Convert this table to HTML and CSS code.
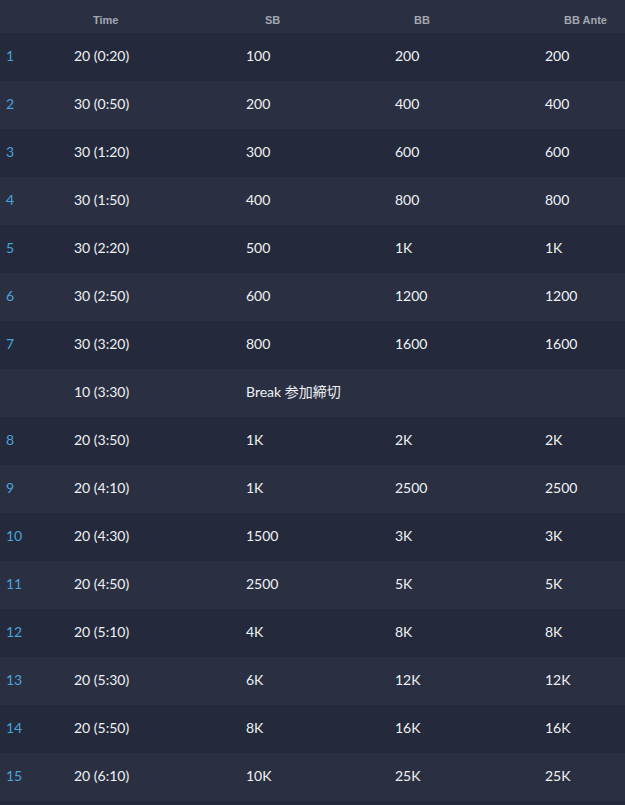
FILE: index.html
```html
<!DOCTYPE html>
<html>
<head>
<meta charset="utf-8">
<link rel="stylesheet" href="styles.css">
</head>
<body>
<div class="table">
  <div class="row head">
    <div class="cell"></div>
    <div class="cell">Time</div>
    <div class="cell">SB</div>
    <div class="cell">BB</div>
    <div class="cell">BB Ante</div>
  </div>
  <div class="row"><div class="cell lv">1</div><div class="cell">20 (0:20)</div><div class="cell">100</div><div class="cell">200</div><div class="cell">200</div></div>
  <div class="row"><div class="cell lv">2</div><div class="cell">30 (0:50)</div><div class="cell">200</div><div class="cell">400</div><div class="cell">400</div></div>
  <div class="row"><div class="cell lv">3</div><div class="cell">30 (1:20)</div><div class="cell">300</div><div class="cell">600</div><div class="cell">600</div></div>
  <div class="row"><div class="cell lv">4</div><div class="cell">30 (1:50)</div><div class="cell">400</div><div class="cell">800</div><div class="cell">800</div></div>
  <div class="row"><div class="cell lv">5</div><div class="cell">30 (2:20)</div><div class="cell">500</div><div class="cell">1K</div><div class="cell">1K</div></div>
  <div class="row"><div class="cell lv">6</div><div class="cell">30 (2:50)</div><div class="cell">600</div><div class="cell">1200</div><div class="cell">1200</div></div>
  <div class="row"><div class="cell lv">7</div><div class="cell">30 (3:20)</div><div class="cell">800</div><div class="cell">1600</div><div class="cell">1600</div></div>
  <div class="row"><div class="cell lv"></div><div class="cell">10 (3:30)</div><div class="cell span">Break 参加締切</div></div>
  <div class="row"><div class="cell lv">8</div><div class="cell">20 (3:50)</div><div class="cell">1K</div><div class="cell">2K</div><div class="cell">2K</div></div>
  <div class="row"><div class="cell lv">9</div><div class="cell">20 (4:10)</div><div class="cell">1K</div><div class="cell">2500</div><div class="cell">2500</div></div>
  <div class="row"><div class="cell lv">10</div><div class="cell">20 (4:30)</div><div class="cell">1500</div><div class="cell">3K</div><div class="cell">3K</div></div>
  <div class="row"><div class="cell lv">11</div><div class="cell">20 (4:50)</div><div class="cell">2500</div><div class="cell">5K</div><div class="cell">5K</div></div>
  <div class="row"><div class="cell lv">12</div><div class="cell">20 (5:10)</div><div class="cell">4K</div><div class="cell">8K</div><div class="cell">8K</div></div>
  <div class="row"><div class="cell lv">13</div><div class="cell">20 (5:30)</div><div class="cell">6K</div><div class="cell">12K</div><div class="cell">12K</div></div>
  <div class="row"><div class="cell lv">14</div><div class="cell">20 (5:50)</div><div class="cell">8K</div><div class="cell">16K</div><div class="cell">16K</div></div>
  <div class="row"><div class="cell lv">15</div><div class="cell">20 (6:10)</div><div class="cell">10K</div><div class="cell">25K</div><div class="cell">25K</div></div>
</div>
</body>
</html>
```
FILE: styles.css
```css
html, body {
  margin: 0;
  padding: 0;
  background: #242a3b;
}
body {
  width: 625px;
  height: 805px;
  overflow: hidden;
  font-family: "Lato", "Noto Sans CJK JP", sans-serif;
  color: #f0f1f4;
}
.table {
  display: flex;
  flex-direction: column;
}
.row {
  display: grid;
  grid-template-columns: 68px 172px 149px 150px 86px;
  height: 48px;
  align-items: center;
  font-size: 14px;
}
.row:nth-child(even) {
  background: #242a3b;
}
.row:nth-child(odd) {
  background: #2a3042;
}
.row.head {
  height: 33px;
  font-family: "Liberation Sans", Arial, sans-serif;
  font-size: 11px;
  font-weight: bold;
  color: #a3a7b0;
  background: #2a3042;
}
.head .cell {
  padding-left: 25px;
  padding-top: 7px;
  padding-bottom: 0;
}
.cell {
  padding-left: 6px;
  padding-bottom: 4px;
  white-space: nowrap;
}
.lv {
  color: #4aa3d8;
}
.span {
  grid-column: 3 / 6;
}
```
